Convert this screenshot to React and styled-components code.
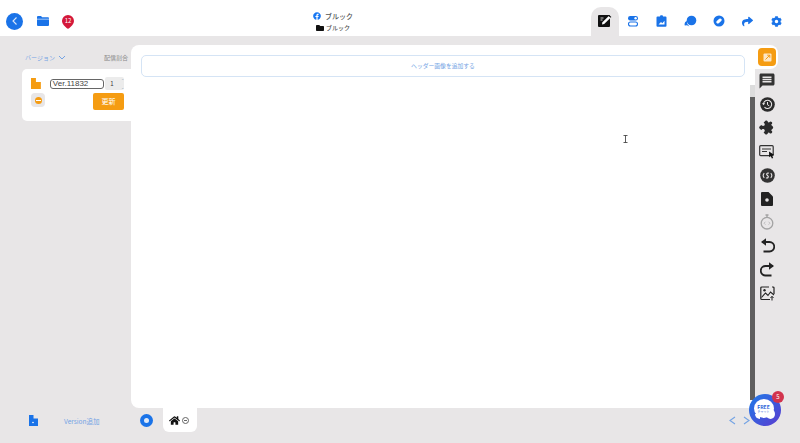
import React from 'react';
import styled, { createGlobalStyle } from 'styled-components';
import { FaFolder, FaShare, FaHome, FaFacebook, FaCog } from 'react-icons/fa';
import { MdMessage, MdExtension } from 'react-icons/md';

const GlobalStyle = createGlobalStyle`
  html, body { margin: 0; padding: 0; height: 100%; background: #e8e6e7; overflow: hidden; }
  body { font-family: "Noto Sans CJK JP", "Noto Sans", "Liberation Sans", sans-serif; }
  * { box-sizing: border-box; }
`;

const blue = '#1a73e8';
const orange = '#f59c12';
const linkBlue = '#74a3e4';
const dark = '#333';

export default function App() {
  return (
    <Page>
      <GlobalStyle />
      <Header>
        <HeaderLeft>
          <BackButton>
            <svg width="8" height="10" viewBox="0 0 8 10"><path d="M5.500 1.500 2 5l3.500 3.500" fill="none" stroke="#dbe8fb" strokeWidth="1.100" /></svg>
          </BackButton>
          <svg width="12" height="10" viewBox="0 0 12 10">
            <path d="M0 1a1 1 0 0 1 1-1h3l1.200 1.300H11a1 1 0 0 1 1 1V9a1 1 0 0 1-1 1H1a1 1 0 0 1-1-1Z" fill={blue} />
            <path d="M0 3.200h12" stroke="#e4eefc" strokeWidth=".7" />
          </svg>
          <PinBadge><span>12</span></PinBadge>
        </HeaderLeft>
        <HeaderTitle>
          <TitleRow>
            <FaFacebook size={8} color="#1877f2" />
            <span>ブルック</span>
          </TitleRow>
          <SubRow>
            <FaFolder size={8} color="#111" />
            <span>ブルック</span>
          </SubRow>
        </HeaderTitle>
        <HeaderTabs>
          <Tab $active>
            <svg width="14" height="14" viewBox="0 0 14 14">
              <rect x="0" y="1" width="12" height="12" rx="1" fill="#111" />
              <path d="M4 10.500l.4-2.200L10.800 2l1.800 1.800L6.200 10.100Z" fill="#fff" />
              <path d="M11.500 1.200 13.400 3l-.8.800-1.800-1.800Z" fill="#111" />
              <path d="M2.500 4h3M2.500 6h2" stroke="#fff" strokeWidth=".8" />
            </svg>
          </Tab>
          <Tab>
            <svg width="12" height="12" viewBox="0 0 12 12">
              <rect x="1" y="1" width="10" height="4.400" rx="2.200" fill={blue} />
              <circle cx="8.600" cy="3.200" r="1.200" fill="#fff" />
              <rect x="1.500" y="7" width="9" height="4" rx="2" fill="#fff" stroke={blue} strokeWidth="1.100" />
            </svg>
          </Tab>
          <Tab>
            <svg width="11" height="12" viewBox="0 0 11 12">
              <path d="M1.500 1.500h2.400L4.500.3h2l.6 1.200h2.400a1 1 0 0 1 1 1v8.200a1 1 0 0 1-1 1h-8a1 1 0 0 1-1-1V2.500a1 1 0 0 1 1-1Z" fill={blue} />
              <path d="M2.500 9.500 5 7l1.300 1.200 2.200-2.400v3.700Z" fill="#fff" />
            </svg>
          </Tab>
          <Tab>
            <svg width="13" height="12" viewBox="0 0 13 12">
              <circle cx="7.500" cy="5.500" r="4.800" fill={blue} />
              <path d="M2.700 5.800a4 4 0 0 0-1.900 4.700l2.200-.3 2.400 1.200-2-2.300Z" fill={blue} />
            </svg>
          </Tab>
          <Tab>
            <svg width="12" height="12" viewBox="0 0 12 12">
              <circle cx="6" cy="6" r="5.500" fill={blue} />
              <rect x="2.900" y="4.500" width="6.200" height="3" rx="1.500" fill="#fff" transform="rotate(-40 6 6)" />
            </svg>
          </Tab>
          <Tab><FaShare size={11} color={blue} /></Tab>
          <Tab><FaCog size={11} color={blue} /></Tab>
        </HeaderTabs>
      </Header>

      <Main>
        <Sidebar>
          <SidebarHead>
            <VersionLabel>
              バージョン
              <svg width="8" height="5" viewBox="0 0 8 5"><path d="M1 1l3 3 3-3" fill="none" stroke={linkBlue} strokeWidth="1" /></svg>
            </VersionLabel>
            <RateLabel>配信割合</RateLabel>
          </SidebarHead>
          <VersionCard>
            <CardRow>
              <svg width="10" height="11" viewBox="0 0 10 11"><path d="M0 0h5v4h5v7H0Z" fill={orange} /></svg>
              <VersionName>Ver.11832</VersionName>
              <RateBox>
                1
                <Spin>
                  <span>⌃</span>
                  <span>⌄</span>
                </Spin>
              </RateBox>
            </CardRow>
            <CardActions>
              <RemoveButton><i /></RemoveButton>
              <UpdateButton>更新</UpdateButton>
            </CardActions>
          </VersionCard>
        </Sidebar>

        <Canvas>
          <AddHeader>ヘッダー画像を追加する</AddHeader>
          <Scrollbar><ScrollThumb /></Scrollbar>
          <TextCursor>
            <svg width="5" height="8" viewBox="0 0 5 8"><path d="M.5.500h4M2.500.500v7M.5 7.500h4" fill="none" stroke="#333" strokeWidth=".8" /></svg>
          </TextCursor>
        </Canvas>

        <Rail>
          <RailActive>
            <OrangeIcon>
              <svg width="9" height="9" viewBox="0 0 9 9">
                <rect x=".5" y=".5" width="8" height="8" rx="1" fill="#fde6c4" />
                <path d="M6.800 2.200 2.500 6.500M6.800 2.200H4.200M6.800 2.200v2.600" stroke={orange} strokeWidth="1" fill="none" />
              </svg>
            </OrangeIcon>
          </RailActive>
          <RailList>
            <RailItem><MdMessage size={18} color={dark} /></RailItem>
            <RailItem>
              <svg width="15" height="15" viewBox="0 0 15 15">
                <circle cx="7.500" cy="7.500" r="7.300" fill="#2b2b2b" />
                <path d="M3.500 6.800a4.100 4.100 0 1 1 1 3.300" fill="none" stroke="#e8e6e7" strokeWidth="1.100" />
                <path d="M2 6.200h3.200L3.500 8.200Z" fill="#e8e6e7" />
                <path d="M7.500 5v2.800l1.800 1" fill="none" stroke="#e8e6e7" strokeWidth="1" />
              </svg>
            </RailItem>
            <RailItem><TiltedPuzzle size={15} color="#2b2b2b" /></RailItem>
            <RailItem>
              <svg width="16" height="14" viewBox="0 0 16 14">
                <rect x=".7" y=".7" width="13.500" height="10" rx="1" fill="none" stroke={dark} strokeWidth="1.200" />
                <path d="M3 4h9M3 6.500h5" stroke={dark} strokeWidth="1.100" />
                <path d="M10 6.500l5 3.300-2 .6 1.200 2.500-1.300.6-1.200-2.500-1.500 1.300Z" fill="#111" />
              </svg>
            </RailItem>
            <RailItem>
              <svg width="15" height="15" viewBox="0 0 15 15">
                <circle cx="7.500" cy="7.500" r="7.300" fill={dark} />
                <path d="M4.300 5.200C2.800 6.300 2.800 8.700 4.300 9.800M10.700 5.200c1.500 1.100 1.500 3.500 0 4.600M9 5.200c-2-.8-3.200 1.200-1.500 2.300s.5 3.100-1.500 2.300" fill="none" stroke="#e8e6e7" strokeWidth="1.100" />
              </svg>
            </RailItem>
            <RailItem>
              <svg width="12" height="14" viewBox="0 0 12 14">
                <path d="M1 0h6.500L12 4.500V13a1 1 0 0 1-1 1H1a1 1 0 0 1-1-1V1a1 1 0 0 1 1-1Z" fill="#222" />
                <circle cx="6" cy="8" r="1.800" fill="#e8e6e7" />
              </svg>
            </RailItem>
            <RailItem>
              <svg width="14" height="16" viewBox="0 0 14 16">
                <circle cx="7" cy="9.200" r="5.800" fill="#e8e6e7" stroke="#a3a3a3" strokeWidth="1.300" />
                <path d="M5.500 1h3M7 1v2" stroke="#a3a3a3" strokeWidth="1.300" />
                <path d="M5.500 7.700 4 9.200l1.500 1.500M8.500 7.700 10 9.200l-1.500 1.500" fill="none" stroke="#b5b5b5" strokeWidth=".8" />
              </svg>
            </RailItem>
            <RailItem>
              <svg width="15" height="15" viewBox="0 0 15 15">
                <path d="M2 4h7.500a4.500 4.500 0 0 1 0 9.500H3.500" fill="none" stroke="#222" strokeWidth="1.800" />
                <path d="M6 .3 1 4l5 3.700Z" fill="#222" />
              </svg>
            </RailItem>
            <RailItem>
              <svg width="15" height="15" viewBox="0 0 15 15">
                <path d="M13 4H5.500a4.500 4.500 0 0 0 0 9.500H11.500" fill="none" stroke="#222" strokeWidth="1.800" />
                <path d="M9 .3 14 4 9 7.700Z" fill="#222" />
              </svg>
            </RailItem>
            <RailItem>
              <svg width="15" height="15" viewBox="0 0 15 15">
                <path d="M9 1H1.800a1 1 0 0 0-1 1v10.500a1 1 0 0 0 1 1H10M14 8V2a1 1 0 0 0-1-1h-1" fill="none" stroke="#222" strokeWidth="1.200" />
                <path d="M1.500 11.500 5.500 7l2.500 2.500L10.500 6 14 9" fill="none" stroke="#222" strokeWidth="1.100" />
                <circle cx="4.500" cy="4.200" r="1.200" fill="#222" />
                <path d="M12 14.500v-4M10.500 12l1.500-1.700 1.500 1.700" fill="none" stroke="#222" strokeWidth="1" />
              </svg>
            </RailItem>
          </RailList>
        </Rail>
      </Main>

      <Footer>
        <FooterLeft>
          <svg width="9" height="11" viewBox="0 0 9 11"><path d="M0 0h4.500v3.500H9v7.500H0Z" fill={blue} /><circle cx="4" cy="7.500" r=".8" fill="#fff" /></svg>
          <AddVersion>Version追加</AddVersion>
        </FooterLeft>
        <AddPage><i /></AddPage>
        <PageTab>
          <FaHome size={11} color="#111" />
          <TabDot><i /></TabDot>
        </PageTab>
        <Pager>
          <svg width="7" height="9" viewBox="0 0 7 9"><path d="M6 1 1 4.500 6 8" fill="none" stroke={linkBlue} strokeWidth="1.100" /></svg>
          <svg width="7" height="9" viewBox="0 0 7 9"><path d="M1 1l5 3.500L1 8" fill="none" stroke={linkBlue} strokeWidth="1.100" /></svg>
        </Pager>
      </Footer>

      <ChatWidget>
        <ChatBubble>
          <ChatFree>FREE</ChatFree>
          <ChatSub>チャット</ChatSub>
        </ChatBubble>
        <ChatBackBubble />
        <ChatBadge>5</ChatBadge>
      </ChatWidget>
    </Page>
  );
}

const Page = styled.div`
  width: 800px;
  height: 443px;
  display: flex;
  flex-direction: column;
  background: #e8e6e7;
`;

const Header = styled.header`
  height: 36px;
  display: grid;
  grid-template-columns: 1fr 1fr;
  background: #fff;
  position: relative;
`;

const HeaderLeft = styled.div`
  display: flex;
  align-items: center;
  gap: 14px;
  padding: 6px 0 0 6px;
`;

const BackButton = styled.div`
  width: 17px;
  height: 17px;
  border-radius: 50%;
  background: ${blue};
  display: flex;
  align-items: center;
  justify-content: center;
`;

const PinBadge = styled.div`
  position: relative;
  width: 12px;
  height: 12px;
  margin-left: -1px;
  color: #fff;
  font-size: 6px;
  line-height: 12px;
  text-align: center;
  &::before {
    content: '';
    position: absolute;
    inset: 0;
    border-radius: 50% 50% 50% 2px;
    transform: rotate(-45deg);
    background: #d4183a;
  }
  span {
    position: relative;
  }
`;

const HeaderTitle = styled.div`
  position: absolute;
  left: 313px;
  top: 11px;
  display: flex;
  flex-direction: column;
  gap: 3px;
`;

const TitleRow = styled.div`
  display: flex;
  align-items: center;
  gap: 4px;
  height: 9px;
  font-size: 7px;
  font-weight: 500;
  color: #555;
`;

const SubRow = styled(TitleRow)`
  padding-left: 3px;
  gap: 2px;
  font-size: 6px;
`;

const HeaderTabs = styled.nav`
  grid-column: 2;
  display: flex;
  justify-content: flex-end;
  align-items: flex-end;
  padding-right: 9px;
`;

const Tab = styled.div`
  width: ${p => (p.$active ? 28 : 28.7)}px;
  height: 29px;
  padding-bottom: 1px;
  display: flex;
  align-items: center;
  justify-content: center;
  border-radius: 10px 10px 0 0;
  background: ${p => (p.$active ? '#e8e6e7' : 'transparent')};
`;

const Main = styled.main`
  flex: 1;
  min-height: 0;
  display: flex;
  padding-top: 9px;
`;

const Sidebar = styled.aside`
  width: 131px;
  padding-left: 22px;
`;

const SidebarHead = styled.div`
  height: 24px;
  padding: 8px 3px 0;
  display: flex;
  justify-content: space-between;
  align-items: flex-start;
`;

const VersionLabel = styled.div`
  display: flex;
  align-items: center;
  gap: 3px;
  font-size: 6px;
  line-height: 9px;
  color: ${linkBlue};
`;

const RateLabel = styled.div`
  font-size: 6px;
  line-height: 9px;
  color: #8a8a8a;
`;

const VersionCard = styled.section`
  height: 52px;
  padding: 8px 7px 0 9px;
  background: #fff;
  border-radius: 5px 0 0 5px;
`;

const CardRow = styled.div`
  display: flex;
  align-items: center;
  gap: 9px;
`;

const VersionName = styled.div`
  width: 55px;
  height: 10px;
  margin-right: -8px;
  border: 1px solid #666;
  border-radius: 3px;
  font-family: "Liberation Sans", sans-serif;
  font-size: 8px;
  line-height: 8px;
  padding-left: 2px;
  color: #444;
`;

const RateBox = styled.div`
  width: 19px;
  height: 13px;
  padding-left: 5px;
  background: #ececec;
  border-radius: 2px;
  font-size: 6px;
  line-height: 13px;
  color: #333;
  display: flex;
  justify-content: space-between;
`;

const Spin = styled.div`
  display: flex;
  flex-direction: column;
  justify-content: space-between;
  font-size: 4px;
  line-height: 6px;
  color: #9ab;
`;

const CardActions = styled.div`
  margin-top: 3px;
  display: flex;
  justify-content: space-between;
  align-items: flex-start;
`;

const RemoveButton = styled.div`
  width: 14px;
  height: 14px;
  border-radius: 4px;
  background: #e8e6e7;
  display: flex;
  align-items: center;
  justify-content: center;
  i {
    width: 7px;
    height: 7px;
    border-radius: 50%;
    background: ${orange};
    display: flex;
    align-items: center;
    justify-content: center;
  }
  i::after {
    content: '';
    width: 5px;
    height: 1px;
    background: #fff;
  }
`;

const UpdateButton = styled.div`
  width: 31px;
  height: 17px;
  background: ${orange};
  border-radius: 2px;
  color: #fff;
  font-size: 7px;
  line-height: 17px;
  text-align: center;
`;

const Canvas = styled.section`
  flex: 1;
  position: relative;
  background: #fff;
  border-radius: 8px 0 0 8px;
  padding: 10px 10px 0;
`;

const AddHeader = styled.div`
  height: 22px;
  border: 1px solid #d5e4f5;
  border-radius: 5px;
  font-size: 5.800px;
  line-height: 20px;
  text-align: center;
  color: ${linkBlue};
`;

const Scrollbar = styled.div`
  position: absolute;
  right: 0;
  top: 40px;
  bottom: 8px;
  width: 5px;
  overflow: hidden;
  background: #dcdcdc;
`;

const ScrollThumb = styled.div`
  margin-top: 12px;
  height: 100%;
  background: #5f5f5f;
`;

const TextCursor = styled.div`
  position: absolute;
  left: 492px;
  top: 90px;
  line-height: 0;
`;

const Rail = styled.aside`
  width: 45px;
  display: flex;
  flex-direction: column;
`;

const RailActive = styled.div`
  width: 23px;
  height: 24px;
  padding: 3px 0 0 3px;
  background: #fff;
  border-radius: 0 8px 8px 0;
`;

const OrangeIcon = styled.div`
  width: 18px;
  height: 18px;
  border-radius: 4px;
  background: ${orange};
  display: flex;
  align-items: center;
  justify-content: center;
`;

const RailList = styled.div`
  display: flex;
  flex-direction: column;
`;

const RailItem = styled.div`
  width: 24px;
  height: 23.600px;
  display: flex;
  align-items: center;
  justify-content: center;
`;

const TiltedPuzzle = styled(MdExtension)`
  transform: rotate(45deg);
`;

const Footer = styled.footer`
  height: 35px;
  display: flex;
  align-items: flex-start;
`;

const FooterLeft = styled.div`
  width: 140px;
  padding: 7px 0 0 29px;
  display: flex;
  align-items: center;
  gap: 26px;
`;

const AddVersion = styled.span`
  font-size: 6.500px;
  color: ${linkBlue};
`;

const AddPage = styled.div`
  width: 13px;
  height: 13px;
  margin-top: 6px;
  border-radius: 50%;
  background: ${blue};
  display: flex;
  align-items: center;
  justify-content: center;
  i {
    width: 5px;
    height: 5px;
    border-radius: 50%;
    background: #dfe9f8;
  }
`;

const PageTab = styled.div`
  margin-left: 10px;
  width: 34px;
  height: 24px;
  padding: 0 0 0 6px;
  background: #fff;
  border-radius: 0 0 6px 6px;
  display: flex;
  align-items: center;
  gap: 2px;
`;

const TabDot = styled.div`
  width: 7px;
  height: 7px;
  border: 1px solid #666;
  border-radius: 50%;
  display: flex;
  align-items: center;
  justify-content: center;
  i {
    width: 3px;
    height: 1px;
    background: #666;
  }
`;

const Pager = styled.div`
  margin-left: auto;
  padding: 8px 50px 0 0;
  display: flex;
  gap: 7px;
`;

const ChatWidget = styled.div`
  position: absolute;
  left: 749px;
  top: 394px;
  width: 32px;
  height: 32px;
  border-radius: 50%;
  background: linear-gradient(135deg, #1f7be8, #5a3bd0);
  display: flex;
  align-items: center;
  justify-content: center;
`;

const ChatBubble = styled.div`
  position: relative;
  z-index: 1;
  width: 20px;
  height: 19px;
  margin: -3px 3px 0 0;
  border-radius: 50%;
  background: #fff;
  display: flex;
  flex-direction: column;
  align-items: center;
  justify-content: center;
  &::after {
    content: '';
    position: absolute;
    left: 1px;
    bottom: -1px;
    width: 5px;
    height: 5px;
    background: #fff;
    border-radius: 0 0 0 5px;
  }
`;

const ChatBackBubble = styled.div`
  position: absolute;
  left: 17px;
  top: 15px;
  width: 9px;
  height: 10px;
  border-radius: 50%;
  background: #fff;
`;

const ChatFree = styled.span`
  font-size: 5px;
  line-height: 6px;
  font-weight: 700;
  color: #2a5fd8;
`;

const ChatSub = styled.span`
  font-size: 3px;
  line-height: 4px;
  color: #2a5fd8;
`;

const ChatBadge = styled.div`
  position: absolute;
  right: -3px;
  top: -3px;
  width: 12px;
  height: 12px;
  border-radius: 50%;
  background: #d2344e;
  color: #fff;
  font-size: 6px;
  line-height: 12px;
  text-align: center;
`;
